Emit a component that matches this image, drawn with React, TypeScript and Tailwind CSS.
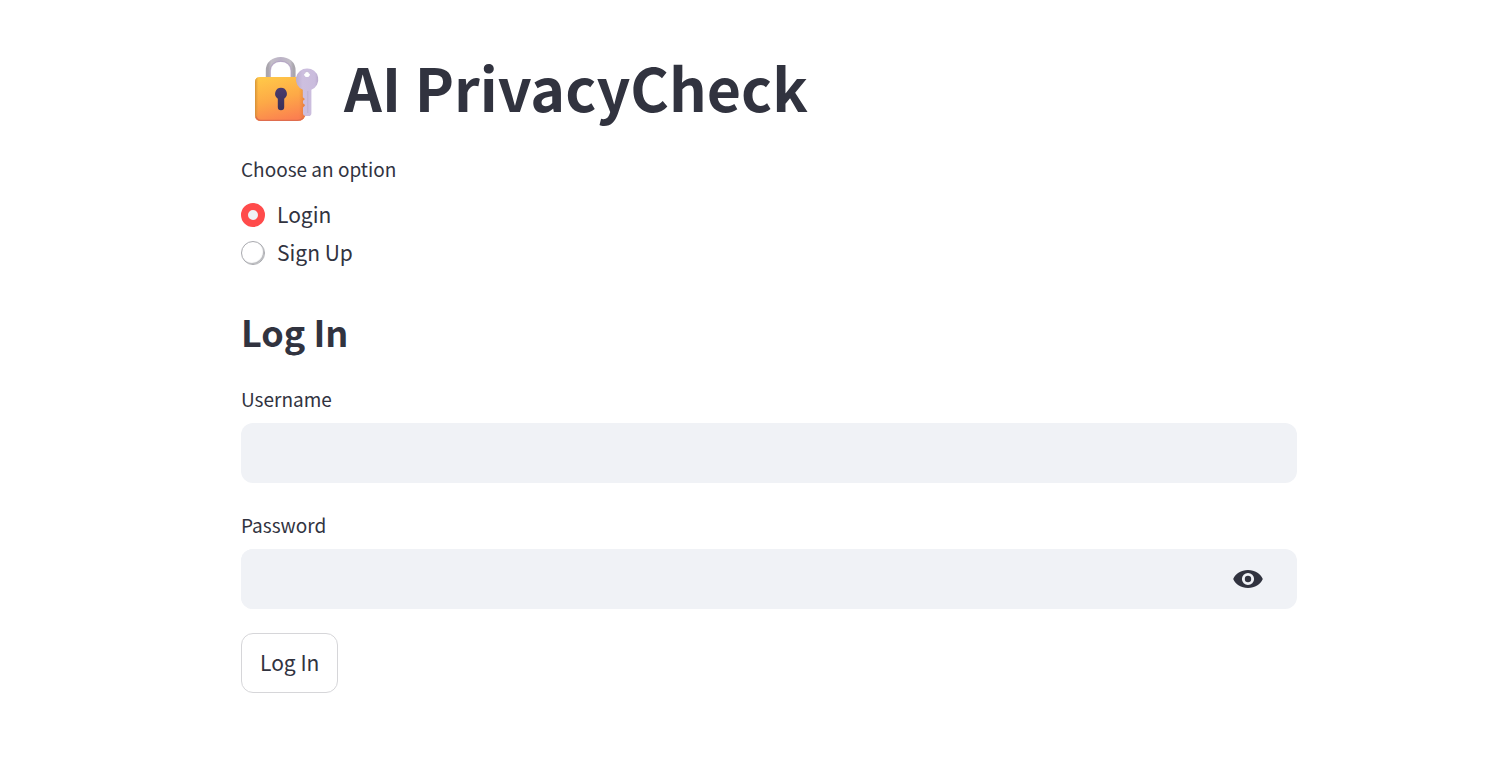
import { useState } from "react";

function LockIcon() {
  return (
    <svg viewBox="14 7 66 70" className="h-[70px] w-[66px] shrink-0" aria-hidden="true">
      <defs>
        <linearGradient id="body" x1="0.3" y1="0" x2="0.6" y2="1">
          <stop offset="0" stopColor="#ffc648" />
          <stop offset="0.5" stopColor="#fda947" />
          <stop offset="1" stopColor="#fb7f50" />
        </linearGradient>
        <linearGradient id="edge" x1="0" y1="0" x2="1" y2="0">
          <stop offset="0" stopColor="#c98732" stopOpacity="0.8" />
          <stop offset="0.07" stopColor="#e09a38" stopOpacity="0" />
          <stop offset="0.86" stopColor="#d9772c" stopOpacity="0" />
          <stop offset="1" stopColor="#c9682c" stopOpacity="0.6" />
        </linearGradient>
        <linearGradient id="shackle" x1="0" y1="0" x2="1" y2="0">
          <stop offset="0" stopColor="#a9a5ad" />
          <stop offset="0.12" stopColor="#c3bec8" />
          <stop offset="0.5" stopColor="#bbb2c6" />
          <stop offset="0.88" stopColor="#c3bec8" />
          <stop offset="1" stopColor="#aaa6ae" />
        </linearGradient>
        <linearGradient id="keyhole" x1="0" y1="0" x2="0" y2="1">
          <stop offset="0" stopColor="#4a3b6d" />
          <stop offset="1" stopColor="#3a3058" />
        </linearGradient>
        <linearGradient id="key" x1="0" y1="0" x2="1" y2="0">
          <stop offset="0" stopColor="#bcadd0" />
          <stop offset="0.3" stopColor="#cdbfdf" />
          <stop offset="0.85" stopColor="#cabcdd" />
          <stop offset="1" stopColor="#b9a9cc" />
        </linearGradient>
      </defs>
      <path d="M28.2 34V25.5C28.2 18.7 33.6 14.4 40.7 14.4S53.2 18.7 53.2 25.5V34" fill="none" stroke="url(#shackle)" strokeWidth="4.8" />
      <path d="M30.3 32V26C30.3 20 34.5 16.4 40.7 16.4S51.1 20 51.1 26V32" fill="none" stroke="#a68fbe" strokeOpacity="0.45" strokeWidth="1.2" />
      <path d="M20 32H61Q66 32 66 37V67Q65.5 76 57 76H21Q15 76 15 70V37Q15 32 20 32Z" fill="url(#body)" />
      <path d="M20 32H61Q66 32 66 37V67Q65.5 76 57 76H21Q15 76 15 70V37Q15 32 20 32Z" fill="url(#edge)" />
      <path d="M16 71.5Q17 75.4 21 75.4H57Q61 75.4 63.2 73" fill="none" stroke="#df6d4e" strokeWidth="1.2" />
      <path d="M41 42.8A6 6 0 0 1 44.2 53.8V62A3.2 3.2 0 0 1 37.8 62V53.8A6 6 0 0 1 41 42.8Z" fill="url(#keyhole)" />
      <path
        fillRule="evenodd"
        d="M67 23.5A11 11 0 0 1 71.4 44.7V68.2Q71.3 71 68.6 71H65.3Q63 71 63 68.6V62.5L64.8 60.8V59.8L63 58.3V55.8L64.6 54.6V53.8L62.8 52.2V44.7A11 11 0 0 1 67 23.5ZM67 26.6A2.7 2.7 0 1 0 67 32A2.7 2.7 0 1 0 67 26.6Z"
        fill="url(#key)"
      />
      <circle cx="67" cy="29.3" r="2.5" fill="#ffffff" />
      <path d="M64.5 29A2.5 2.5 0 0 1 69.5 29" fill="none" stroke="#b0a0c4" strokeWidth="0.6" />
      <path d="M67.8 46V68" stroke="#beafcf" strokeWidth="1" />
    </svg>
  );
}

function EyeIcon() {
  return (
    <svg viewBox="0 0 30 18" className="h-[18px] w-[30px]" fill="#31333f" aria-hidden="true">
      <path
        fillRule="evenodd"
        d="M15 0C8 0 2.6 3.5 0.2 9C2.6 14.5 8 18 15 18S27.4 14.5 29.8 9C27.4 3.5 22 0 15 0ZM15 2.9A6.1 6.1 0 1 0 15 15.1A6.1 6.1 0 1 0 15 2.9Z"
      />
      <circle cx="15" cy="9" r="3.2" />
    </svg>
  );
}

const options = ["Login", "Sign Up"];
const labelClass = "block text-[19px] leading-6";
const inputClass = "h-[60px] w-full rounded-xl bg-[#f0f2f6] px-4 text-[21px] outline-none";

export default function App() {
  const [option, setOption] = useState("Login");
  const [visible, setVisible] = useState(false);
  const action = option === "Login" ? "Log In" : "Sign Up";

  return (
    <div className="min-h-screen bg-white pr-4 pl-[50px] pt-[47px] pb-16 font-['Noto_Sans_CJK_SC','Noto_Sans',sans-serif] text-[#31333f]">
      <main className="mx-auto max-w-[1056px]">
        <h1 className="flex items-center gap-6 pl-[13px] text-[59px] leading-[80px] font-bold">
          <LockIcon />
          <span>AI PrivacyCheck</span>
        </h1>

        <fieldset className="mt-[30px]">
          <legend className={labelClass}>Choose an option</legend>
          <div className="mt-[15px] flex flex-col items-start">
            {options.map((name) => (
              <label key={name} className="flex h-[38px] items-center gap-3 text-[21px] leading-7">
                <input
                  type="radio"
                  name="option"
                  checked={option === name}
                  onChange={() => setOption(name)}
                  className="size-6 appearance-none rounded-full border border-[#a9aaaf] bg-white shadow-[inset_-1px_-1px_1px_#b3b4b8] checked:border-[7px] checked:border-[#ff4b4b] checked:bg-[#f0f2f6] checked:shadow-none"
                />
                <span className="pb-0.5">{name}</span>
              </label>
            ))}
          </div>
        </fieldset>

        <form onSubmit={(e) => e.preventDefault()}>
          <h2 className="mt-[35px] text-[36px] leading-[48px] font-semibold">{action}</h2>
          <div className="mt-8">
            <label htmlFor="username" className={labelClass}>Username</label>
            <input id="username" type="text" autoComplete="username" className={`mt-3 block ${inputClass}`} />
          </div>
          <div className="mt-[30px]">
            <label htmlFor="password" className={labelClass}>Password</label>
            <div className="mt-3 flex items-center rounded-xl bg-[#f0f2f6] pr-[34px]">
              <input id="password" type={visible ? "text" : "password"} autoComplete="current-password" className={inputClass} />
              <button type="button" aria-label="Show password text" onClick={() => setVisible(!visible)} className="shrink-0">
                <EyeIcon />
              </button>
            </div>
          </div>
          <button type="submit" className="mt-6 h-[60px] rounded-xl border border-[#d6d6d9] px-[18px] pb-0.5 text-[21px] leading-7">
            {action}
          </button>
        </form>
      </main>
    </div>
  );
}
